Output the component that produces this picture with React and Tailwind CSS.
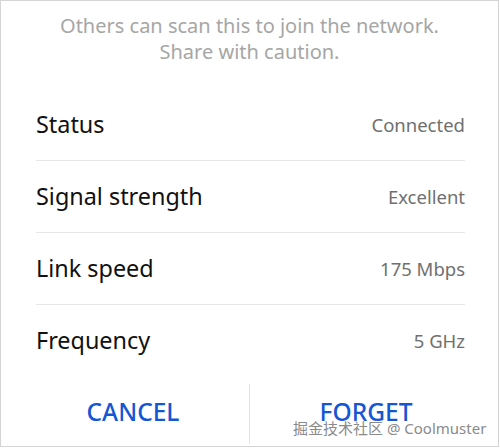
export default function App() {
  const rows = [
    ["Status", "Connected"],
    ["Signal strength", "Excellent"],
    ["Link speed", "175 Mbps"],
    ["Frequency", "5 GHz"],
  ];
  return (
    <div
      className="w-[500px] h-[448px] bg-white overflow-hidden"
      style={{ fontFamily: '"Noto Sans", "Noto Sans CJK SC", sans-serif' }}
    >
      <div className="w-[499px] h-[447px] border border-[#d4d4d4] relative flex flex-col">
        <div className="pt-[12px] text-center text-[20px] leading-[26px] text-[#a6a6a6]">
          <div>Others can scan this to join the network.</div>
          <div>Share with caution.</div>
        </div>
        <div className="mt-[24px] pl-[35px] pr-[33px]">
          {rows.map(([k, v], i) => (
            <div
              key={k}
              className={`h-[72px] flex items-center justify-between ${i < 3 ? "border-b border-[#e6e6e6]" : ""}`}
            >
              <span className="text-[23.4px] text-[#111]">{k}</span>
              <span className="text-[18.5px] text-[#707070]">{v}</span>
            </div>
          ))}
        </div>
        <div className="flex-1 flex items-center mt-[4px] pb-[2px]">
          <div className="flex-1 text-center text-[24.5px] font-medium text-[#1456d4] pl-[16px]">CANCEL</div>
          <div className="w-px h-[60px] bg-[#e3e3e3] self-end"></div>
          <div className="flex-1 text-center text-[24.5px] font-medium text-[#1456d4] pr-[16px]">FORGET</div>
        </div>
        <div
          className="absolute left-[292px] top-[416px] text-[15px] leading-[22px] text-[#8a8a8a] whitespace-nowrap"
          style={{ textShadow: "0 0 2px #fff, 0 0 2px #fff" }}
        >
          掘金技术社区 @ Coolmuster
        </div>
      </div>
    </div>
  );
}
